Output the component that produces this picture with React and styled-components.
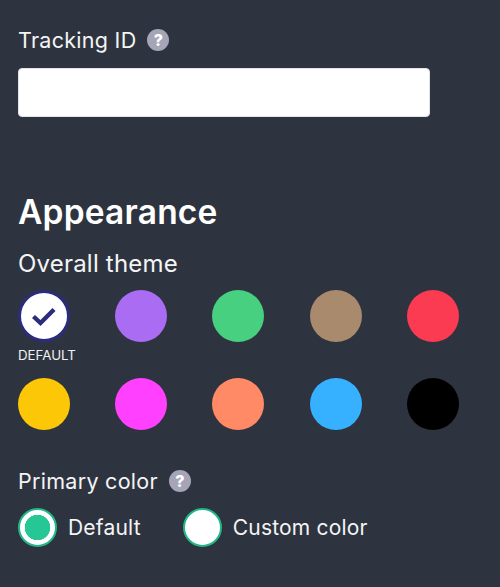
import React from "react";
import styled, { createGlobalStyle } from "styled-components";

const themes = [
  { color: "#ffffff", selected: true, caption: "DEFAULT" },
  { color: "#a96cf2" },
  { color: "#46d07f" },
  { color: "#a98a6d" },
  { color: "#fb3b52" },
  { color: "#fcc707" },
  { color: "#ff40ff" },
  { color: "#ff8a65" },
  { color: "#36b1ff" },
  { color: "#000000" },
];

const App = () => {
  return (
    <>
      <GlobalStyle />
      <Page>
        <LabelRow>
          <Label>Tracking ID</Label>
          <Help>?</Help>
        </LabelRow>
        <TextInput type="text" />

        <Heading>Appearance</Heading>
        <SubLabel>Overall theme</SubLabel>
        <ThemeGrid>
          {themes.map((theme) => (
            <ThemeCell key={theme.color}>
              <Swatch $color={theme.color} $selected={theme.selected}>
                {theme.selected && (
                  <svg width="28" height="22" viewBox="0 0 28 22">
                    <path
                      d="M3.5 11.5 L10.5 18 L24 4.5"
                      fill="none"
                      stroke="#2c2c7c"
                      strokeWidth="4.4"
                    />
                  </svg>
                )}
              </Swatch>
              {theme.caption && <Caption>{theme.caption}</Caption>}
            </ThemeCell>
          ))}
        </ThemeGrid>

        <PrimaryRow>
          <Label>Primary color</Label>
          <Help>?</Help>
        </PrimaryRow>
        <RadioRow>
          <RadioOption>
            <Radio $checked />
            <RadioText>Default</RadioText>
          </RadioOption>
          <RadioOption>
            <Radio />
            <RadioText>Custom color</RadioText>
          </RadioOption>
        </RadioRow>
      </Page>
    </>
  );
};

export default App;

const GlobalStyle = createGlobalStyle`
  html, body {
    margin: 0;
    background: #2e343f;
  }
`;

const Page = styled.div`
  box-sizing: border-box;
  width: 500px;
  height: 587px;
  padding: 24px 0 0 18px;
  background: #2e343f;
  color: #ffffff;
  font-family: "Inter", "Liberation Sans", sans-serif;
  overflow: hidden;
`;

const LabelRow = styled.div`
  display: flex;
  align-items: center;
  gap: 11px;
  height: 32px;
`;

const Label = styled.span`
  font-size: 21.5px;
  line-height: 32px;
  letter-spacing: 0.28px;
  color: #f4f4f6;
`;

const Help = styled.span`
  display: flex;
  align-items: center;
  justify-content: center;
  width: 22px;
  height: 22px;
  border-radius: 50%;
  background: #a5a5b7;
  color: #ffffff;
  font-size: 16px;
  font-weight: 800;
`;

const TextInput = styled.input`
  display: block;
  box-sizing: border-box;
  width: 412px;
  height: 49px;
  margin-top: 12px;
  border: 1px solid #e4e4e8;
  border-radius: 4px;
  background: #ffffff;
`;

const Heading = styled.h2`
  margin: 73px 0 0;
  font-size: 33.5px;
  line-height: 44px;
  font-weight: 600;
  letter-spacing: 0.2px;
  color: #ffffff;
`;

const SubLabel = styled.div`
  margin-top: 14px;
  font-size: 24px;
  line-height: 32px;
  letter-spacing: 0.2px;
  color: #f4f4f6;
`;

const ThemeGrid = styled.div`
  display: grid;
  grid-template-columns: repeat(5, 52px);
  grid-template-rows: 72px 52px;
  column-gap: 45.2px;
  row-gap: 16px;
  margin-top: 10px;
`;

const ThemeCell = styled.div`
  display: flex;
  flex-direction: column;
  align-items: flex-start;
`;

const Swatch = styled.div`
  display: flex;
  align-items: center;
  justify-content: center;
  box-sizing: border-box;
  width: 52px;
  height: 52px;
  flex: none;
  border-radius: 50%;
  background: ${(p) => p.$color};
  border: ${(p) => (p.$selected ? "3px solid #2c2c7c" : "none")};
`;

const Caption = styled.span`
  margin-top: 5px;
  font-size: 13.3px;
  line-height: 16px;
  color: #f0f0f2;
  white-space: nowrap;
`;

const PrimaryRow = styled(LabelRow)`
  margin-top: 35px;
`;

const RadioRow = styled.div`
  display: flex;
  gap: 42px;
  margin-top: 11px;
`;

const RadioOption = styled.label`
  display: flex;
  align-items: center;
  gap: 11px;
`;

const Radio = styled.span`
  box-sizing: border-box;
  width: 39px;
  height: 39px;
  border-radius: 50%;
  border: 2px solid #20b887;
  background: ${(p) =>
    p.$checked
      ? "radial-gradient(circle, #26c795 0 12.5px, #ffffff 13px)"
      : "#ffffff"};
`;

const RadioText = styled.span`
  font-size: 21px;
  letter-spacing: 0.2px;
  color: #f4f4f6;
`;
